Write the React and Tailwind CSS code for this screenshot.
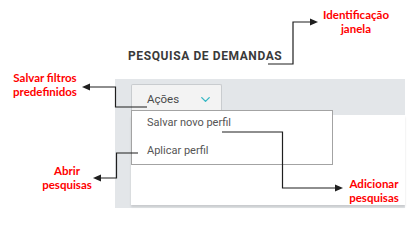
import { ChevronDown } from 'lucide-react'

// Annotation callouts drawn over the screen capture.
const NOTES = [
  { text: ['Identificação', 'janela'], className: 'left-[317px] top-[8px] w-[78px]' },
  { text: ['Salvar filtros', 'predefinidos'], className: 'left-[5px] top-[71px] w-[80px]' },
  { text: ['Abrir', 'pesquisas'], className: 'left-[30px] top-[164px] w-[74px]' },
  { text: ['Adicionar', 'pesquisas'], className: 'left-[339px] top-[177px] w-[70px]' },
]

const ARROWS = [
  { points: '268,64 293,64 293,22 311,22', tip: '318,22 310,18.5 310,25.5' },
  { points: '147,107 115.5,107 115.5,87 89,87', tip: '82,87 90,83.5 90,90.5' },
  { points: '138,153 116.5,153 116.5,178 100,178', tip: '93,178 101,174.5 101,181.5' },
  { points: '222,132 282.5,132 282.5,188 336,188', tip: '343,188 335,184.5 335,191.5' },
]

function Callouts() {
  return (
    <>
      <svg className="absolute inset-0 pointer-events-none" width="410" height="215" viewBox="0 0 410 215">
        {ARROWS.map((a, i) => (
          <g key={i}>
            <polyline points={a.points} fill="none" stroke="#1f1f1f" strokeWidth="1.2" />
            <polygon points={a.tip} fill="#1f1f1f" />
          </g>
        ))}
      </svg>
      {NOTES.map(({ text, className }) => (
        <div
          key={text[0]}
          className={`absolute text-center text-[11.5px] leading-[14px] font-bold text-[#ff0000] font-['Lato',sans-serif] ${className}`}
        >
          {text[0]}
          <br />
          {text[1]}
        </div>
      ))}
    </>
  )
}

export default function App() {
  return (
    <div className="relative w-[410px] h-[215px] overflow-hidden bg-white font-['Roboto',sans-serif]">
      <h1 className="pl-[128px] pt-[47px] h-[79px] text-[12px] font-bold tracking-[0.6px] text-[#3a3a3a]">
        PESQUISA DE DEMANDAS
      </h1>

      <div className="relative ml-[115px] w-[290px] h-[129px] bg-[#e3e6e9] pt-[5px]">
        <div className="ml-[16px] w-[91px] h-[31px] flex items-start justify-between pt-[6px] pl-[15px] pr-[8px] bg-[#f3f3f3] border border-b-0 border-[#c9cccf] rounded-t-[2px]">
          <span className="text-[11.5px] text-[#4a4a4a]">Ações</span>
          <ChevronDown size={15} strokeWidth={2.2} className="text-[#36b8c4] mt-[1px]" />
        </div>
        <div className="ml-[16px] h-[90px] bg-white shadow-[0_2px_2px_rgba(0,0,0,0.12)]" />

        <div className="absolute left-[16px] top-[31px] w-[202px] h-[55px] bg-white border border-[#a3a3a3] flex flex-col pl-[15px] pt-[4px] text-[11px] text-[#555]">
          <div className="h-[28px]">Salvar novo perfil</div>
          <div>Aplicar perfil</div>
        </div>
      </div>

      <Callouts />
    </div>
  )
}
